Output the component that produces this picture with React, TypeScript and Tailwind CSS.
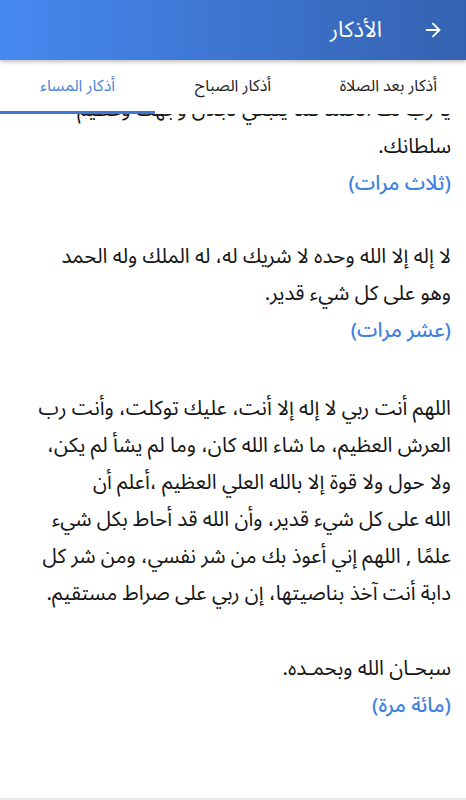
import { ArrowRight } from 'lucide-react';

interface Dhikr {
  lines: string[];
  count: string;
  gap: string;
}

const azkar: Dhikr[] = [
  {
    lines: ['يا رب لك الحمد كما ينبغي لجلال وجهك وعظيم', 'سلطانك.'],
    count: '(ثلاث مرات)',
    gap: 'mb-[36px]',
  },
  {
    lines: ['لا إله إلا الله وحده لا شريك له، له الملك وله الحمد', 'وهو على كل شيء قدير.'],
    count: '(عشر مرات)',
    gap: 'mb-[41px]',
  },
  {
    lines: [
      'اللهم أنت ربي لا إله إلا أنت، عليك توكلت، وأنت رب',
      'العرش العظيم، ما شاء الله كان، وما لم يشأ لم يكن،',
      'ولا حول ولا قوة إلا بالله العلي العظيم ،أعلم أن',
      'الله على كل شيء قدير، وأن الله قد أحاط بكل شيء',
      'علمًا , اللهم إني أعوذ بك من شر نفسي، ومن شر كل',
      'دابة أنت آخذ بناصيتها، إن ربي على صراط مستقيم.',
    ],
    count: '',
    gap: 'mb-[38px]',
  },
  {
    lines: ['سبحـان الله وبحمـده.'],
    count: '(مائة مرة)',
    gap: 'mb-[36px]',
  },
];

const tabs = ['أذكار بعد الصلاة', 'أذكار الصباح', 'أذكار المساء'];

export default function App() {
  const active = 2;

  return (
    <div
      dir="rtl"
      className="h-[800px] w-[466px] flex flex-col bg-white border-b-2 border-gray-200"
      style={{ fontFamily: '"Noto Sans Arabic", "DejaVu Sans", sans-serif' }}
    >
      {/* Header */}
      <div className="relative z-20 h-[60px] shrink-0 flex items-center gap-[40px] px-[22px] bg-gradient-to-l from-[#3462b0] to-[#4689f0] shadow-[0_2px_4px_rgba(0,0,0,0.25)]">
        <ArrowRight size={22} className="text-white" strokeWidth={2} />
        <h1 className="text-[22px] text-white">الأذكار</h1>
      </div>

      {/* Tabs */}
      <div className="relative z-10 h-[54px] shrink-0 flex bg-white">
        {tabs.map((tab, i) => (
          <div
            key={tab}
            className={`flex-1 flex items-center justify-center text-[16px] border-b-[3px] ${
              i === active ? 'text-[#4a86d8] border-[#3d78d6]' : 'text-[#222] border-transparent'
            }`}
          >
            {tab}
          </div>
        ))}
      </div>

      {/* Content */}
      <div className="flex-1 overflow-hidden">
        <div className="-mt-[23px] pr-[15px] pl-[4px] text-[20.5px] leading-[37px] text-[#151515]">
          {azkar.map((z, i) => (
            <div key={i} className={z.gap}>
              {z.lines.map((line) => (
                <p key={line} className="whitespace-nowrap">
                  {line}
                </p>
              ))}
              {z.count && <p className="font-medium text-[#3f82df]">{z.count}</p>}
            </div>
          ))}
        </div>
      </div>
    </div>
  );
}
